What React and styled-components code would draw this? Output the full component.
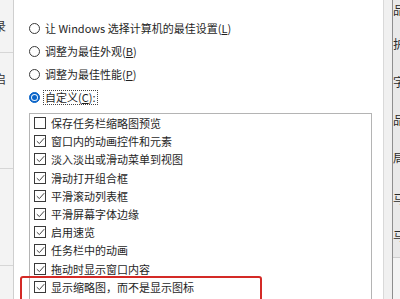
import React from "react";
import styled, { createGlobalStyle } from "styled-components";

const GlobalStyle = createGlobalStyle`
  html, body {
    margin: 0;
    padding: 0;
    background: #ffffff;
  }
  body {
    font-family: "Noto Sans CJK SC", "Noto Sans", sans-serif;
    color: #1f1f1f;
  }
`;

const Screen = styled.div`
  width: 400px;
  height: 299px;
  display: flex;
  overflow: hidden;
`;

const SideStrip = styled.div`
  width: 13px;
  flex-shrink: 0;
  background: #f3f3f3;
  border-right: 1px solid #cfcfcf;
  display: flex;
  flex-direction: column;
  overflow: hidden;
`;

const SideCell = styled.div`
  height: ${(p) => p.h}px;
  flex-shrink: 0;
  border-bottom: 1px solid #d6d6d6;
  overflow: hidden;
`;

const SideGlyph = styled.span`
  display: block;
  margin-left: -6px;
  margin-top: ${(p) => p.top}px;
  font-size: 12px;
  line-height: 14px;
  color: #333;
`;

const Dialog = styled.div`
  flex: 1;
  position: relative;
  background: #ffffff;
  padding: 17px 11px 0 15px;
  display: flex;
  flex-direction: column;
`;

const RadioRow = styled.div`
  height: 23px;
  display: flex;
  align-items: center;
  gap: 3px;
  font-size: 11px;
  white-space: nowrap;
`;

const RadioDot = styled.span`
  width: 11px;
  height: 11px;
  box-sizing: border-box;
  border-radius: 50%;
  border: 1px solid ${(p) => (p.checked ? "#0a64c8" : "#3a3a3a")};
  background: ${(p) => (p.checked ? "#0a64c8" : "#fff")};
  display: flex;
  align-items: center;
  justify-content: center;
  flex-shrink: 0;

  &::after {
    content: "";
    display: ${(p) => (p.checked ? "block" : "none")};
    width: 5px;
    height: 5px;
    border-radius: 50%;
    background: #0a64c8;
    box-shadow: 0 0 0 1px #e8f1fb;
  }
`;

const Label = styled.span`
  padding: 0 1px;
  border: 1px ${(p) => (p.focused ? "dotted #444" : "solid transparent")};
  line-height: 13px;
`;

const Key = styled.u`
  text-underline-offset: 1px;
`;

const ListBox = styled.div`
  margin-top: 4px;
  border: 1px solid #b4b4b4;
  border-bottom: none;
  flex: 1;
  padding: 0 4px;
  display: flex;
  flex-direction: column;
`;

const CheckRow = styled.div`
  height: 18.2px;
  display: flex;
  align-items: center;
  gap: 5px;
  font-size: 11px;
  white-space: nowrap;
`;

const Box = styled.span`
  width: 12px;
  height: 12px;
  box-sizing: border-box;
  border: 1px solid #3a3a3a;
  background: #fff;
  flex-shrink: 0;
  display: flex;
  align-items: center;
  justify-content: center;
`;

const Highlight = styled.div`
  position: absolute;
  left: 6px;
  top: 276px;
  width: 238px;
  height: 30px;
  border: 2.5px solid #d42a26;
  border-radius: 3px;
`;

const RightStrip = styled.div`
  width: 16px;
  flex-shrink: 0;
  display: flex;
  border-left: 1px solid #d9d9d9;
`;

const RightGutter = styled.div`
  width: 8px;
  background: #f0f0f0;
  border-right: 1px solid #8e8e8e;
`;

const RightPane = styled.div`
  flex: 1;
  background: #e9e9e9;
  overflow: hidden;
  display: flex;
  flex-direction: column;
`;

const RightGlyph = styled.span`
  display: block;
  height: ${(p) => p.h}px;
  flex-shrink: 0;
  font-size: 12px;
  line-height: 14px;
  color: #2a2a2a;
  padding-top: 3px;
`;

const RightFoot = styled.div`
  flex: 1;
  background: #f4f4f4;
  border-top: 1px solid #cfcfcf;
`;

const radios = [
  { text: "让 Windows 选择计算机的最佳设置", key: "L" },
  { text: "调整为最佳外观", key: "B" },
  { text: "调整为最佳性能", key: "P" },
  { text: "自定义", key: "C", suffix: ":", checked: true },
];

const options = [
  { text: "保存任务栏缩略图预览", checked: false },
  { text: "窗口内的动画控件和元素", checked: true },
  { text: "淡入淡出或滑动菜单到视图", checked: true },
  { text: "滑动打开组合框", checked: true },
  { text: "平滑滚动列表框", checked: true },
  { text: "平滑屏幕字体边缘", checked: true },
  { text: "启用速览", checked: true },
  { text: "任务栏中的动画", checked: true },
  { text: "拖动时显示窗口内容", checked: true },
  { text: "显示缩略图，而不是显示图标", checked: true },
];

const rightGlyphs = [
  { c: "品", h: 31 },
  { c: "护", h: 35 },
  { c: "字", h: 35 },
  { c: "品", h: 35 },
  { c: "局", h: 38 },
  { c: "马", h: 34 },
  { c: "马", h: 28 },
];

function Check() {
  return (
    <svg width="9" height="8" viewBox="0 0 9 8">
      <path d="M0.8 4.2 L3.4 6.6 L8.2 1.2" fill="none" stroke="#444" strokeWidth="1" />
    </svg>
  );
}

export default function App() {
  return (
    <>
      <GlobalStyle />
      <Screen>
        <SideStrip>
          <SideCell h={52}>
            <SideGlyph top={19}>录</SideGlyph>
          </SideCell>
          <SideCell h={115}>
            <SideGlyph top={19}>启</SideGlyph>
          </SideCell>
          <SideCell h={96} />
        </SideStrip>

        <Dialog>
          {radios.map((r) => (
            <RadioRow key={r.key}>
              <RadioDot checked={r.checked} />
              <Label focused={r.checked}>
                {r.text}(<Key>{r.key}</Key>){r.suffix}
              </Label>
            </RadioRow>
          ))}
          <ListBox>
            {options.map((o) => (
              <CheckRow key={o.text}>
                <Box>{o.checked && <Check />}</Box>
                <span>{o.text}</span>
              </CheckRow>
            ))}
          </ListBox>
          <Highlight />
        </Dialog>

        <RightStrip>
          <RightGutter />
          <RightPane>
            {rightGlyphs.map((g, i) => (
              <RightGlyph key={i} h={g.h}>
                {g.c}
              </RightGlyph>
            ))}
            <RightFoot />
          </RightPane>
        </RightStrip>
      </Screen>
    </>
  );
}
